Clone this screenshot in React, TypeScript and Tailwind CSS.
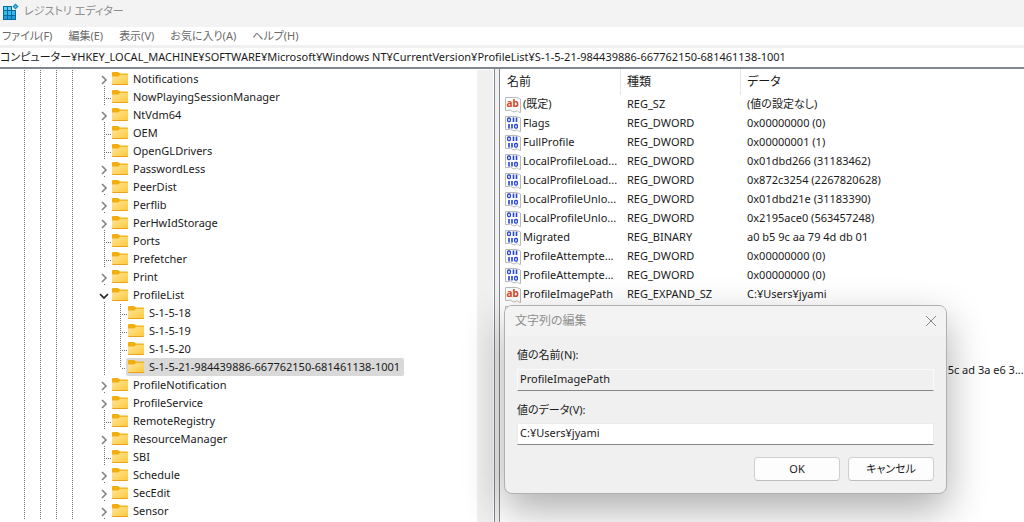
type TreeNode = {
  name: string;
  state?: "closed" | "open";
  child?: boolean;
  last?: boolean;
  selected?: boolean;
};

type RegValue = {
  name: string;
  type: string;
  data: string;
  icon: "string" | "binary";
};

const MENU = ["ファイル(F)", "編集(E)", "表示(V)", "お気に入り(A)", "ヘルプ(H)"];

const PATH =
  "コンピューター¥HKEY_LOCAL_MACHINE¥SOFTWARE¥Microsoft¥Windows NT¥CurrentVersion¥ProfileList¥S-1-5-21-984439886-667762150-681461138-1001";

const TREE: TreeNode[] = [
  { name: "Notifications", state: "closed" },
  { name: "NowPlayingSessionManager" },
  { name: "NtVdm64", state: "closed" },
  { name: "OEM" },
  { name: "OpenGLDrivers" },
  { name: "PasswordLess", state: "closed" },
  { name: "PeerDist", state: "closed" },
  { name: "Perflib", state: "closed" },
  { name: "PerHwIdStorage", state: "closed" },
  { name: "Ports" },
  { name: "Prefetcher" },
  { name: "Print", state: "closed" },
  { name: "ProfileList", state: "open" },
  { name: "S-1-5-18", child: true },
  { name: "S-1-5-19", child: true },
  { name: "S-1-5-20", child: true },
  { name: "S-1-5-21-984439886-667762150-681461138-1001", child: true, last: true, selected: true },
  { name: "ProfileNotification", state: "closed" },
  { name: "ProfileService", state: "closed" },
  { name: "RemoteRegistry" },
  { name: "ResourceManager", state: "closed" },
  { name: "SBI" },
  { name: "Schedule", state: "closed" },
  { name: "SecEdit", state: "closed" },
  { name: "Sensor", state: "closed" },
];

const VALUES: RegValue[] = [
  { name: "(既定)", type: "REG_SZ", data: "(値の設定なし)", icon: "string" },
  { name: "Flags", type: "REG_DWORD", data: "0x00000000 (0)", icon: "binary" },
  { name: "FullProfile", type: "REG_DWORD", data: "0x00000001 (1)", icon: "binary" },
  { name: "LocalProfileLoad...", type: "REG_DWORD", data: "0x01dbd266 (31183462)", icon: "binary" },
  { name: "LocalProfileLoad...", type: "REG_DWORD", data: "0x872c3254 (2267820628)", icon: "binary" },
  { name: "LocalProfileUnlo...", type: "REG_DWORD", data: "0x01dbd21e (31183390)", icon: "binary" },
  { name: "LocalProfileUnlo...", type: "REG_DWORD", data: "0x2195ace0 (563457248)", icon: "binary" },
  { name: "Migrated", type: "REG_BINARY", data: "a0 b5 9c aa 79 4d db 01", icon: "binary" },
  { name: "ProfileAttempte...", type: "REG_DWORD", data: "0x00000000 (0)", icon: "binary" },
  { name: "ProfileAttempte...", type: "REG_DWORD", data: "0x00000000 (0)", icon: "binary" },
  { name: "ProfileImagePath", type: "REG_EXPAND_SZ", data: "C:¥Users¥jyami", icon: "string" },
  { name: "", type: "", data: "", icon: "binary" },
  { name: "", type: "", data: "", icon: "binary" },
  { name: "", type: "", data: "", icon: "binary" },
  {
    name: "",
    type: "",
    data: "01 05 00 00 00 00 00 05 15 00 00 00 4e 5c ad 3a e6 3...",
    icon: "binary",
  },
];

const DOTS_Y = "w-px bg-[repeating-linear-gradient(to_bottom,#6e6e6e_0_1px,transparent_1px_2px)]";
const DOTS_X = "h-px bg-[repeating-linear-gradient(to_right,transparent_0_1px,#6e6e6e_1px_2px)]";

function RegeditIcon() {
  return (
    <svg width="17" height="17" viewBox="0 0 17 17" aria-hidden="true">
      <path d="M1 3h9v4h4v10H1z" fill="#0b6a9c" />
      <path d="M2 4h3v3H2zM6 4h3v3H6z" fill="#5fd0f5" />
      <path d="M2 8h3v4H2zM6 8h3v4H6zM10 8h3v4h-3z" fill="#35b8ee" />
      <path d="M2 13h3v3H2zM6 13h3v3H6zM10 13h3v3h-3z" fill="#1f9fe0" />
      <path d="M13.5 0.5l3 3-3 3-3-3z" fill="#1583bd" />
      <path d="M13.5 2l1.5 1.5L13.5 5 12 3.5z" fill="#49c4f3" />
    </svg>
  );
}

function FolderIcon() {
  return (
    <svg width="16" height="14" viewBox="0 0 16 14" className="shrink-0" aria-hidden="true">
      <defs>
        <linearGradient id="folder" x1="0" y1="0" x2="1" y2="1">
          <stop offset="0" stopColor="#ffe69c" />
          <stop offset="1" stopColor="#ffc736" />
        </linearGradient>
      </defs>
      <path d="M0 1Q0 0 1 0H6L8 1.500H15Q16 1.500 16 2.500V6H0z" fill="#f3ae0c" />
      <path d="M0 4.500H6.500L8 2.800H16V12Q16 13 15 13H1Q0 13 0 12z" fill="url(#folder)" />
      <path d="M0 12H16Q16 13 15 13H1Q0 13 0 12z" fill="#e5a419" />
    </svg>
  );
}

function ValueIcon({ kind }: { kind: RegValue["icon"] }) {
  return (
    <svg width="16" height="16" viewBox="0 0 16 16" className="shrink-0" aria-hidden="true">
      <path
        d="M0.500 0.500H11.500L15.500 2V15.500L13.500 15 12 13.500 10 15 7.500 14.500 5.500 13 3 13.500H0.500z"
        fill="#fdfdfd"
        stroke="#b9b9b9"
      />
      {kind === "string" ? (
        <text x="1.500" y="10" fontSize="10" fontWeight="700" fontFamily="Noto Sans" fill="#d9481f">
          ab
        </text>
      ) : (
        <g fill="none" stroke="#2546d8">
          <rect x="2.600" y="2" width="2.800" height="3.600" rx="1" strokeWidth="1.300" />
          <path d="M8.500 1.500v4.600M11.500 1.500v4.600M4 8v4.600M7 8v4.600" strokeWidth="1.600" />
          <rect x="9.600" y="8.500" width="2.800" height="3.600" rx="1" strokeWidth="1.300" />
        </g>
      )}
    </svg>
  );
}

function Toggle({ node }: { node: TreeNode }) {
  const open = node.state === "open";
  return (
    <span className="flex w-4 flex-col">
      <button
        type="button"
        aria-label={node.name}
        aria-expanded={open}
        className="flex h-4 w-[15px] items-center justify-center pt-[3px]"
      >
        <svg width="10" height="10" viewBox="0 0 10 10" fill="none" strokeWidth="1.700">
          {open ? <path d="M1 3l4 4 4-4" stroke="#222" /> : <path d="M3 1l4 4-4 4" stroke="#858585" />}
        </svg>
      </button>
      <span className={`ml-2 h-px ${DOTS_Y}`} />
    </span>
  );
}

// dotted connector from the parent line to an item without children
function Branch({ last }: { last?: boolean }) {
  return (
    <span className="flex w-4 pl-2">
      <span className={`${DOTS_Y} ${last ? "h-[10px]" : ""}`} />
      <span className={`mt-[10px] mr-px flex-1 ${DOTS_X}`} />
    </span>
  );
}

function TreeRow({ node }: { node: TreeNode }) {
  return (
    <li className="flex h-[18px] pl-6">
      {[0, 1, 2, 3].map((i) => (
        <span key={i} className="flex w-4">
          <span className={DOTS_Y} />
        </span>
      ))}
      <span className="w-2" />
      {node.child ? (
        <>
          <span className="flex w-4 pl-2">
            <span className={DOTS_Y} />
          </span>
          <Branch last={node.last} />
        </>
      ) : node.state ? (
        <Toggle node={node} />
      ) : (
        <Branch />
      )}
      <span
        className={`-ml-[2px] flex items-center gap-[5px] rounded-xs pr-1 pl-[2px] whitespace-nowrap ${node.selected ? "bg-[#d9d9d9]" : ""}`}
      >
        <FolderIcon />
        {node.name}
      </span>
    </li>
  );
}

function ValueTable() {
  return (
    <table className="w-full table-fixed border-separate border-spacing-0 text-left">
      <colgroup>
        <col className="w-[121px]" />
        <col className="w-[120px]" />
        <col />
      </colgroup>
      <thead>
        <tr className="h-[26px]">
          <th className="border-r border-[#e5e5e5] p-0 pl-[7px] text-xs font-normal">名前</th>
          <th className="border-r border-[#e5e5e5] p-0 pl-[6px] text-xs font-normal">種類</th>
          <th className="p-0 pl-[6px] text-xs font-normal">データ</th>
        </tr>
      </thead>
      <tbody>
        {VALUES.map((value, i) => (
          <tr key={i} className="h-[19px]">
            <td className="p-0 pl-[5px]">
              <div className="flex items-center gap-[2px] whitespace-nowrap">
                <ValueIcon kind={value.icon} />
                {value.name}
              </div>
            </td>
            <td className="p-0 pl-[6px] whitespace-nowrap">{value.type}</td>
            <td className="p-0 pl-[6px] whitespace-nowrap">{value.data}</td>
          </tr>
        ))}
      </tbody>
    </table>
  );
}

function EditDialog() {
  const button =
    "h-6 w-[86px] rounded border border-[#d0d0d0] border-b-[#bdbdbd] bg-[#fdfdfd] text-center";
  return (
    <div
      role="dialog"
      aria-labelledby="dialog-title"
      className="absolute top-[305px] left-[504px] w-[443px] overflow-hidden rounded-lg border border-[#b0b0b0] bg-[#f0f0f0] shadow-[0_16px_40px_rgba(0,0,0,0.32)]"
    >
      <div className="flex h-[30px] items-center justify-between bg-[#f3f3f3] pr-[9px] pl-[10px]">
        <h2 id="dialog-title" className="text-xs text-[#8f8f8f]">
          文字列の編集
        </h2>
        <button type="button" aria-label="閉じる">
          <svg width="12" height="12" viewBox="0 0 12 12" stroke="#8a8a8a">
            <path d="M1 1l10 10M11 1L1 11" />
          </svg>
        </button>
      </div>
      <form className="flex flex-col px-3 pt-[11px] pb-3">
        <label htmlFor="value-name" className="leading-4">
          値の名前(N):
        </label>
        <input
          id="value-name"
          readOnly
          defaultValue="ProfileImagePath"
          className="mt-[6px] h-[22px] border border-[#fafafa] border-b-[#868686] bg-[#f0f0f0] px-[2px] pb-[3px] outline-none"
        />
        <label htmlFor="value-data" className="mt-[11px] leading-4">
          値のデータ(V):
        </label>
        <input
          id="value-data"
          defaultValue="C:¥Users¥jyami"
          className="mt-[5px] h-[22px] border border-[#ececec] border-b-[#868686] bg-white px-[2px] pb-[3px] outline-none"
        />
        <div className="mt-3 flex justify-end gap-2">
          <button type="submit" className={button}>
            OK
          </button>
          <button type="button" className={button}>
            キャンセル
          </button>
        </div>
      </form>
    </div>
  );
}

export default function App() {
  return (
    <div className="relative flex h-screen flex-col overflow-hidden bg-white font-['Noto_Sans','Noto_Sans_CJK_JP',sans-serif] text-[11px] text-[#1a1a1a] [font-feature-settings:'palt']">
      <header className="flex h-[27px] shrink-0 items-center gap-[5px] bg-[#f3f3f3] pb-1 pl-[2px]">
        <RegeditIcon />
        <h1 className="text-[#8c8c8c]">レジストリ エディター</h1>
      </header>
      <nav className="flex h-[18px] shrink-0 items-center gap-4 pt-px pl-[2px] text-[#6a6a6a]">
        {MENU.map((item) => (
          <button key={item} type="button">
            {item}
          </button>
        ))}
      </nav>
      <div className="flex h-6 shrink-0 border-t-[3px] border-b-2 border-t-[#f0f0f0] border-b-[#828790]">
        <input aria-label="アドレス" defaultValue={PATH} className="w-full outline-none" />
      </div>
      <main className="flex min-h-0 flex-1">
        <div className="flex w-[495px] shrink-0 border-r border-[#828790]">
          <ul className="min-w-0 flex-1 overflow-hidden pt-px">
            {TREE.map((node) => (
              <TreeRow key={node.name} node={node} />
            ))}
          </ul>
          <div className="mt-px mr-px w-4 bg-[#f0f0f0]" />
        </div>
        <div className="w-1 shrink-0 bg-[#f0f0f0]" />
        <div className="min-w-0 flex-1 overflow-hidden border-l border-[#828790]">
          <ValueTable />
        </div>
      </main>
      <EditDialog />
    </div>
  );
}
